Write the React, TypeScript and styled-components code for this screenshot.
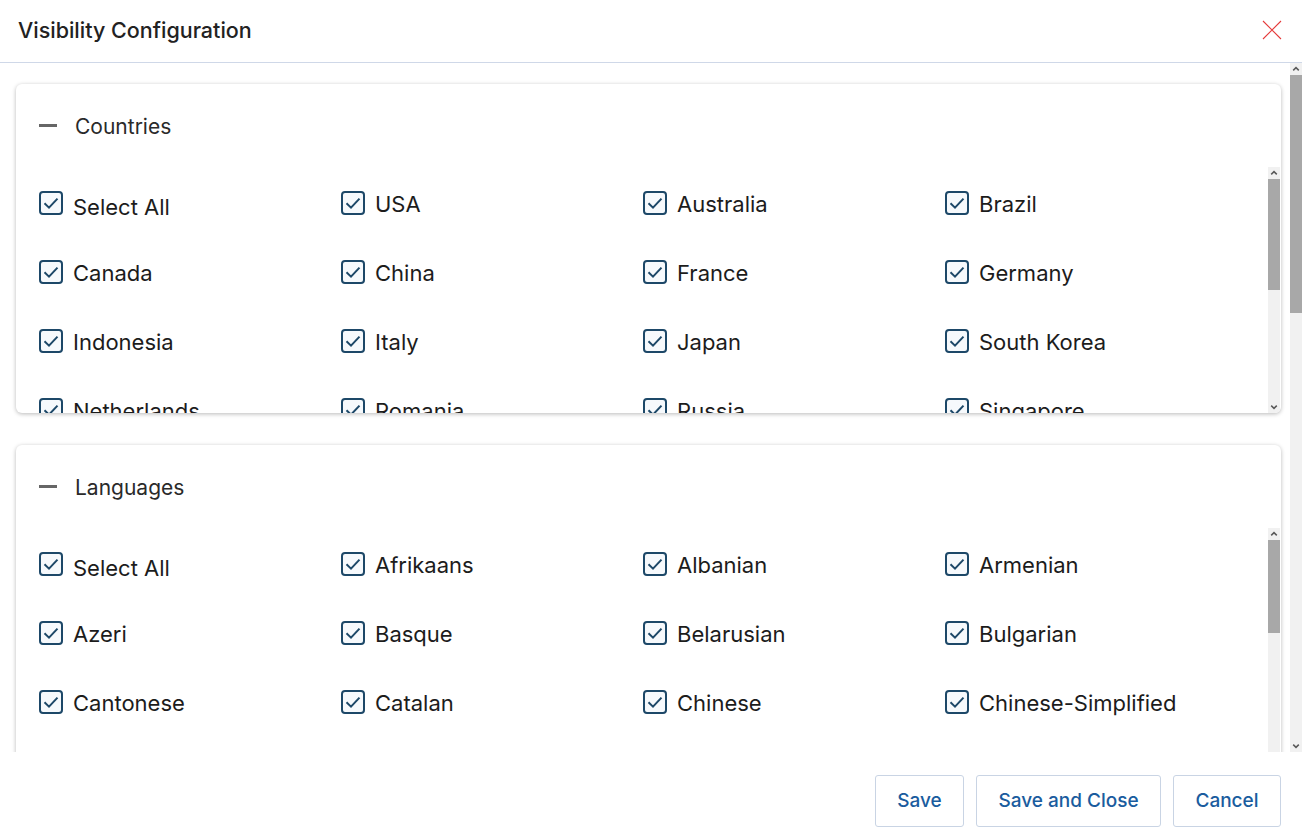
import styled, { createGlobalStyle } from 'styled-components';

const GlobalStyle = createGlobalStyle`
  html, body {
    margin: 0;
    padding: 0;
    background: #fff;
    font-family: Inter, "Noto Sans", "Liberation Sans", sans-serif;
  }
`;

const countries = [
  'Select All', 'USA', 'Australia', 'Brazil',
  'Canada', 'China', 'France', 'Germany',
  'Indonesia', 'Italy', 'Japan', 'South Korea',
  'Netherlands', 'Romania', 'Russia', 'Singapore',
];

const languages = [
  'Select All', 'Afrikaans', 'Albanian', 'Armenian',
  'Azeri', 'Basque', 'Belarusian', 'Bulgarian',
  'Cantonese', 'Catalan', 'Chinese', 'Chinese-Simplified',
];

// [title, items, scroll thumb offset, thumb height]
const sections: [string, string[], number, number][] = [
  ['Countries', countries, 0, 111],
  ['Languages', languages, 0, 93],
];

function CheckIcon() {
  return (
    <svg width="24" height="24" viewBox="0 0 24 24">
      <rect x="1" y="1" width="22" height="22" rx="3" fill="#f6f9fc" stroke="#1d4868" strokeWidth="2" />
      <path d="M5.5 12.3 L10 16.6 L18.5 7.6" fill="none" stroke="#1d4868" strokeWidth="2" />
    </svg>
  );
}

function CloseIcon() {
  return (
    <svg width="20" height="20" viewBox="0 0 20 20">
      <path d="M1 1 L19 19 M19 1 L1 19" stroke="#e53a3a" strokeWidth="1.1" />
    </svg>
  );
}

function Chevron({ down }: { down?: boolean }) {
  return (
    <svg width="12" height="12" viewBox="0 0 12 12">
      <path
        d={down ? 'M3.2 4.6 L6 7.4 L8.8 4.6' : 'M3.2 7.4 L6 4.6 L8.8 7.4'}
        fill="none"
        stroke="#5a5a5a"
        strokeWidth="1.5"
      />
    </svg>
  );
}

function ScrollBar({ offset, thumb }: { offset: number; thumb: number }) {
  return (
    <Track>
      <ArrowCell>
        <Chevron />
      </ArrowCell>
      <Rail>
        <Thumb $offset={offset} $height={thumb} />
      </Rail>
      <ArrowCell>
        <Chevron down />
      </ArrowCell>
    </Track>
  );
}

function Section({ title, items, offset, thumb }: { title: string; items: string[]; offset: number; thumb: number }) {
  return (
    <Card>
      <CardHeader>
        <Dash />
        <CardTitle>{title}</CardTitle>
      </CardHeader>
      <CardScroll>
        <Grid>
          {items.map((name) => (
            <Item key={name}>
              <CheckIcon />
              <Label $shift={name === 'Select All'}>{name}</Label>
            </Item>
          ))}
        </Grid>
        <ScrollBar offset={offset} thumb={thumb} />
      </CardScroll>
    </Card>
  );
}

export default function App() {
  return (
    <>
      <GlobalStyle />
      <Modal>
        <Header>
          <Title>Visibility Configuration</Title>
          <CloseButton>
            <CloseIcon />
          </CloseButton>
        </Header>
        <Body>
          <Content>
            {sections.map(([title, items, offset, thumb]) => (
              <Section key={title} title={title} items={items} offset={offset} thumb={thumb} />
            ))}
          </Content>
          <ScrollBar offset={0} thumb={238} />
        </Body>
        <Footer>
          <Button $width={89}>Save</Button>
          <Button $width={185}>Save and Close</Button>
          <Button $width={108}>Cancel</Button>
        </Footer>
      </Modal>
    </>
  );
}

const Modal = styled.div`
  width: 1302px;
  height: 837px;
  display: flex;
  flex-direction: column;
  background: #fff;
  overflow: hidden;
`;

const Header = styled.div`
  height: 62px;
  flex-shrink: 0;
  display: flex;
  align-items: center;
  justify-content: space-between;
  padding: 0 20px 0 18px;
  border-bottom: 1px solid #cfd8e8;
`;

const Title = styled.div`
  font-size: 21.5px;
  font-weight: 500;
  color: #222;
  margin-top: -3px;
`;

const CloseButton = styled.div`
  display: flex;
  margin-top: -2px;
`;

const Body = styled.div`
  height: 689px;
  flex-shrink: 0;
  display: flex;
`;

const Content = styled.div`
  flex: 1;
  overflow: hidden;
  padding: 21px 9px 0 16px;
`;

const Track = styled.div`
  width: 12px;
  flex-shrink: 0;
  display: flex;
  flex-direction: column;
  background: #f1f1f1;
`;

const ArrowCell = styled.div`
  height: 12px;
  display: flex;
  align-items: center;
  justify-content: center;
  flex-shrink: 0;
`;

const Rail = styled.div`
  flex: 1;
  display: flex;
  flex-direction: column;
`;

const Thumb = styled.div<{ $offset: number; $height: number }>`
  margin-top: ${({ $offset }) => $offset}px;
  height: ${({ $height }) => $height}px;
  background: #a8a8a8;
`;

const Card = styled.div`
  background: #fff;
  border-radius: 6px;
  box-shadow: 0 1px 4px rgba(0, 0, 0, 0.28);
  margin-bottom: 32px;
  overflow: hidden;
`;

const CardHeader = styled.div`
  height: 83px;
  display: flex;
  align-items: center;
  padding-left: 23px;
`;

const Dash = styled.div`
  width: 18px;
  height: 3px;
  background: #666;
  margin-right: 18px;
`;

const CardTitle = styled.div`
  font-size: 21px;
  color: #2a2a2a;
  margin-top: 1px;
`;

const CardScroll = styled.div`
  height: 246px;
  display: flex;
  padding-right: 1px;
`;

const Grid = styled.div`
  flex: 1;
  overflow: hidden;
  display: grid;
  grid-template-columns: repeat(4, 302px);
  align-content: start;
  row-gap: 45px;
  padding: 24px 0 0 23px;
`;

const Item = styled.div`
  display: flex;
  align-items: center;
  height: 24px;
  gap: 10px;
`;

const Label = styled.span<{ $shift?: boolean }>`
  font-size: 22px;
  color: #1c1c1c;
  white-space: nowrap;
  position: relative;
  top: ${({ $shift }) => ($shift ? '4px' : '1px')};
`;

const Footer = styled.div`
  height: 86px;
  flex-shrink: 0;
  display: flex;
  justify-content: flex-end;
  align-items: flex-start;
  gap: 12px;
  padding: 23px 21px 0 0;
  box-sizing: border-box;
`;

const Button = styled.button<{ $width: number }>`
  width: ${({ $width }) => $width}px;
  height: 52px;
  padding-bottom: 2px;
  background: #fff;
  border: 1px solid #c9d4e4;
  border-radius: 3px;
  font-family: Inter, "Noto Sans", "Liberation Sans", sans-serif;
  font-size: 19px;
  font-weight: 500;
  color: #1a5c9e;
  cursor: pointer;
`;
